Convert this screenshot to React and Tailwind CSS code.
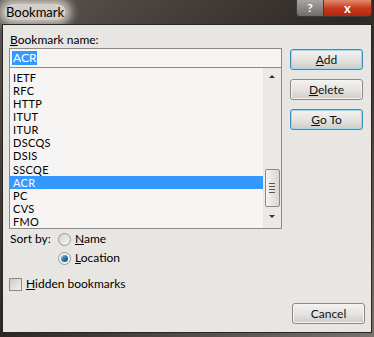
import React from 'react';

const items = ['IETF', 'RFC', 'HTTP', 'ITUT', 'ITUR', 'DSCQS', 'DSIS', 'SSCQE', 'ACR', 'PC', 'CVS', 'FMO'];

function DlgButton({ children, focused }) {
  return (
    <button
      className={`w-[73px] h-[21px] rounded-[3px] border text-[12px] text-[#111] bg-gradient-to-b from-[#f4f3f1] via-[#e6e4e1] to-[#cfccc8] flex items-center justify-center ${
        focused ? 'border-[#3c8fb8] shadow-[inset_0_0_0_1px_#9fd6ee]' : 'border-[#8d8a86] shadow-[inset_0_0_0_1px_#f6f5f3]'
      }`}
    >
      {children}
    </button>
  );
}

export default function App() {
  return (
    <div className="w-[374px] h-[337px] bg-gradient-to-br from-[#5e5752] via-[#2e2825] to-[#7a736d] flex flex-col font-['Lato',sans-serif] overflow-hidden">
      {/* title bar */}
      <div className="h-[24px] flex items-start">
        <div className="text-[13px] text-black pl-[4px] pt-[3px] flex-1">
          <span className="bg-[#d3cec8] rounded-full px-[2px] shadow-[0_0_10px_5px_#cfc9c3]">Bookmark</span>
        </div>
        <div className="flex mr-[2px]">
          <div className="w-[28px] h-[17px] rounded-bl-[4px] border border-[#3b3b3b] border-t-0 bg-gradient-to-b from-[#a8a5a2] to-[#6f6c69] text-white text-[12px] font-bold flex items-center justify-center leading-none">?</div>
          <div className="w-[48px] h-[17px] rounded-br-[4px] border border-[#3b3b3b] border-t-0 border-l-0 bg-gradient-to-b from-[#e08a70] via-[#c8391c] to-[#b4280e] text-white text-[13px] font-bold flex items-center justify-center leading-none">x</div>
        </div>
      </div>
      {/* body */}
      <div className="mx-[2px] mb-[4px] flex-1 border border-[#2a2623] bg-[#e8e6e3] flex flex-col px-[6px] pt-[7px] pb-[8px]">
        <div className="flex gap-[8px]">
          <div className="w-[273px] flex flex-col">
            <div className="text-[12px] text-black leading-[16px] pl-[1px]"><span className="underline">B</span>ookmark name:</div>
            <div className="h-[20px] border border-[#8d8a86] bg-[#f6f5f3] flex items-center px-[2px]">
              <span className="bg-[#3399ff] text-white text-[12px] leading-[14px] px-[1px]">ACR</span>
            </div>
            <div className="h-[161px] border border-[#8d8a86] border-t-0 bg-[#f6f5f3] flex">
              <div className="flex-1 flex flex-col pt-[3px]">
                {items.map((it) => (
                  <div
                    key={it}
                    className={`h-[13.3px] text-[11px] tracking-[0.3px] leading-[13px] pl-[3px] ${it === 'ACR' ? 'bg-[#3399ff] text-white' : 'text-black'}`}
                  >
                    {it}
                  </div>
                ))}
              </div>
              <div className="w-[18px] bg-[#ebe9e6] flex flex-col items-center pt-[7px]">
                <div className="w-0 h-0 border-l-[3px] border-r-[3px] border-b-[3px] border-l-transparent border-r-transparent border-b-[#333]" />
                <div className="h-[91px]" />
                <div className="w-[15px] h-[38px] rounded-[2px] border border-[#8d8a86] bg-gradient-to-r from-[#f4f3f1] to-[#d9d6d2] flex flex-col items-center justify-center gap-[2px]">
                  <div className="w-[6px] h-[1px] bg-[#555]" />
                  <div className="w-[6px] h-[1px] bg-[#555]" />
                  <div className="w-[6px] h-[1px] bg-[#555]" />
                  <div className="w-[6px] h-[1px] bg-[#555]" />
                </div>
                <div className="h-[8px]" />
                <div className="w-0 h-0 border-l-[3px] border-r-[3px] border-t-[3px] border-l-transparent border-r-transparent border-t-[#333]" />
              </div>
            </div>
          </div>
          <div className="flex flex-col gap-[9px] pt-[17px]">
            <DlgButton focused><span className="underline">A</span>dd</DlgButton>
            <DlgButton><span className="underline">D</span>elete</DlgButton>
            <DlgButton focused><span className="underline">G</span>o To</DlgButton>
          </div>
        </div>
        <div className="flex mt-[1px] text-[12px] text-black">
          <div className="w-[49px] pl-[1px] leading-[18px]">Sort by:</div>
          <div className="flex flex-col gap-[1px]">
            <div className="flex items-center gap-[4px] h-[18px]">
              <div className="w-[13px] h-[13px] rounded-full border border-[#9a9794] bg-gradient-to-br from-[#d6d4d1] to-[#f6f5f3]" />
              <span><span className="underline">N</span>ame</span>
            </div>
            <div className="flex items-center gap-[4px] h-[18px]">
              <div className="w-[13px] h-[13px] rounded-full border border-[#9a9794] bg-[#f2f1ef] flex items-center justify-center">
                <div className="w-[7px] h-[7px] rounded-full bg-gradient-to-br from-[#8fd0f0] via-[#2a79ac] to-[#15486e]" />
              </div>
              <span><span className="underline">L</span>ocation</span>
            </div>
          </div>
        </div>
        <div className="flex items-center gap-[4px] mt-[8px] text-[12px] text-black">
          <div className="w-[13px] h-[13px] border border-[#8d8a86] bg-gradient-to-br from-[#cfccc8] to-[#f2f1ef]" />
          <span><span className="underline">H</span>idden bookmarks</span>
        </div>
        <div className="flex-1" />
        <div className="flex justify-end">
          <DlgButton>Cancel</DlgButton>
        </div>
      </div>
    </div>
  );
}
